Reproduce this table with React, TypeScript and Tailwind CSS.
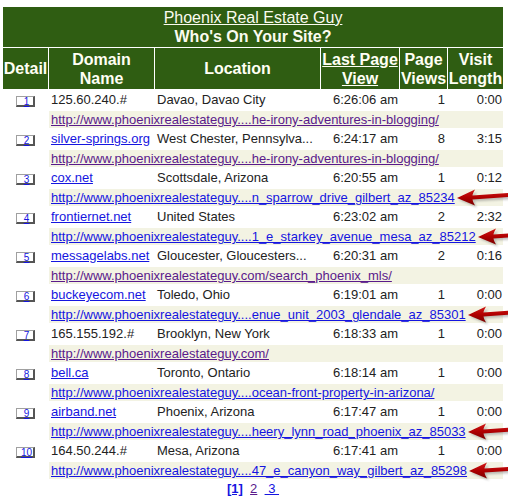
import React from 'react'

interface Visit {
  n: number
  domain: string
  domainIsLink: boolean
  location: string
  time: string
  views: number
  length: string
  url: string
  visited: boolean
  arrow?: boolean
}

const VISITS: Visit[] = [
  { n: 1, domain: '125.60.240.#', domainIsLink: false, location: 'Davao, Davao City', time: '6:26:06 am', views: 1, length: '0:00', url: 'http://www.phoenixrealestateguy....he-irony-adventures-in-blogging/', visited: true },
  { n: 2, domain: 'silver-springs.org', domainIsLink: true, location: 'West Chester, Pennsylva...', time: '6:24:17 am', views: 8, length: '3:15', url: 'http://www.phoenixrealestateguy....he-irony-adventures-in-blogging/', visited: true },
  { n: 3, domain: 'cox.net', domainIsLink: true, location: 'Scottsdale, Arizona', time: '6:20:55 am', views: 1, length: '0:12', url: 'http://www.phoenixrealestateguy....n_sparrow_drive_gilbert_az_85234', visited: false, arrow: true },
  { n: 4, domain: 'frontiernet.net', domainIsLink: true, location: 'United States', time: '6:23:02 am', views: 2, length: '2:32', url: 'http://www.phoenixrealestateguy....1_e_starkey_avenue_mesa_az_85212', visited: false, arrow: true },
  { n: 5, domain: 'messagelabs.net', domainIsLink: true, location: 'Gloucester, Gloucesters...', time: '6:20:31 am', views: 2, length: '0:16', url: 'http://www.phoenixrealestateguy.com/search_phoenix_mls/', visited: true },
  { n: 6, domain: 'buckeyecom.net', domainIsLink: true, location: 'Toledo, Ohio', time: '6:19:01 am', views: 1, length: '0:00', url: 'http://www.phoenixrealestateguy....enue_unit_2003_glendale_az_85301', visited: false, arrow: true },
  { n: 7, domain: '165.155.192.#', domainIsLink: false, location: 'Brooklyn, New York', time: '6:18:33 am', views: 1, length: '0:00', url: 'http://www.phoenixrealestateguy.com/', visited: true },
  { n: 8, domain: 'bell.ca', domainIsLink: true, location: 'Toronto, Ontario', time: '6:18:14 am', views: 1, length: '0:00', url: 'http://www.phoenixrealestateguy....ocean-front-property-in-arizona/', visited: false },
  { n: 9, domain: 'airband.net', domainIsLink: true, location: 'Phoenix, Arizona', time: '6:17:47 am', views: 1, length: '0:00', url: 'http://www.phoenixrealestateguy....heery_lynn_road_phoenix_az_85033', visited: false, arrow: true },
  { n: 10, domain: '164.50.244.#', domainIsLink: false, location: 'Mesa, Arizona', time: '6:17:41 am', views: 1, length: '0:00', url: 'http://www.phoenixrealestateguy....47_e_canyon_way_gilbert_az_85298', visited: false, arrow: true },
]

function RedArrow() {
  return (
    <svg width="58" height="22" viewBox="0 0 58 22" className="absolute left-full top-1/2 -translate-y-1/2 ml-[1px] pointer-events-none">
      <defs>
        <linearGradient id="arrowRed" x1="0" y1="0" x2="0" y2="1">
          <stop offset="0" stopColor="#d01818" />
          <stop offset="0.5" stopColor="#b00000" />
          <stop offset="1" stopColor="#7a0000" />
        </linearGradient>
        <filter id="arrowShadow" x="-20%" y="-40%" width="140%" height="180%">
          <feGaussianBlur stdDeviation="1.2" />
        </filter>
      </defs>
      {/* soft grey shadow */}
      <path
        d="M3 13 L21 5 Q18.5 9 18.5 10.5 L58 8 L58 12 L18.5 14.5 Q18.5 16.5 21 20.5 Z"
        fill="#777"
        opacity="0.45"
        filter="url(#arrowShadow)"
      />
      <path
        d="M1 11 L19 2.5 Q16.5 7 16.5 8.6 L58 5.6 L58 9.6 L16.5 12.6 Q16.5 14.5 19 18.5 Z"
        fill="url(#arrowRed)"
      />
    </svg>
  )
}

function DetailBox({ n }: { n: number }) {
  return (
    <span className="inline-block h-[11px] min-w-[19px] px-[1px] border-t border-l border-b-2 border-r-2 border-t-[#a0a0a0] border-l-[#a0a0a0] border-b-[#555] border-r-[#555] bg-white text-center align-middle">
      <a className="block text-[10px] leading-[9px] text-[#1515e0] underline pl-[3px]">{n}</a>
    </span>
  )
}

export default function App() {
  return (
    <div className="w-[508px] h-[501px] overflow-hidden bg-white pt-[6px] pl-[2px] text-[13px] leading-[16px] text-[#222]" style={{ fontFamily: '"Liberation Sans", Arial, sans-serif' }}>
      <table className="w-[502px] table-fixed border-separate border-spacing-px">
        <colgroup>
          <col className="w-[45px]" />
          <col className="w-[105px]" />
          <col className="w-[165px]" />
          <col className="w-[78px]" />
          <col className="w-[47px]" />
          <col className="w-[55px]" />
        </colgroup>
        <thead>
          <tr>
            <th colSpan={6} className="h-[40px] bg-[#2f5d12] text-center text-[16px] leading-[19px] text-[#fbfbef]">
              <div className="font-normal underline">Phoenix Real Estate Guy</div>
              <div className="font-bold">Who's On Your Site?</div>
            </th>
          </tr>
          <tr className="text-[16px] leading-[19px] font-bold text-[#fffff4]">
            <th className="h-[41px] bg-[#2f5d12] text-center">Detail</th>
            <th className="bg-[#2f5d12] text-center">Domain<br />Name</th>
            <th className="bg-[#2f5d12] text-center">Location</th>
            <th className="bg-[#2f5d12] text-center"><span className="underline">Last Page<br />View</span></th>
            <th className="bg-[#2f5d12] text-center">Page<br />Views</th>
            <th className="bg-[#2f5d12] text-center">Visit<br />Length</th>
          </tr>
        </thead>
        <tbody>
          {VISITS.map(v => (
            <React.Fragment key={v.n}>
              <tr className="h-[20px]">
                <td className="h-[20px] text-center align-middle pt-[2px] leading-[12px]"><DetailBox n={v.n} /></td>
                <td className="pl-[2px] whitespace-nowrap overflow-hidden">
                  {v.domainIsLink ? <a className="text-[#1515e0] underline">{v.domain}</a> : v.domain}
                </td>
                <td className="pl-[2px] whitespace-nowrap overflow-hidden">{v.location}</td>
                <td className="pr-[1px] text-right whitespace-nowrap">{v.time}</td>
                <td className="pr-[2px] text-right">{v.views}</td>
                <td className="pr-[1px] text-right">{v.length}</td>
              </tr>
              <tr className="h-[17px]">
                <td className="h-[17px]" />
                <td colSpan={5} className="h-[17px] bg-[#f3f3e3] pl-[2px] leading-[15px] whitespace-nowrap">
                  <span className="relative inline-block align-top">
                    <a className={v.visited ? 'text-[#5a1a8b] underline' : 'text-[#1515e0] underline'}>{v.url}</a>
                    {v.arrow && <RedArrow />}
                  </span>
                </td>
              </tr>
            </React.Fragment>
          ))}
        </tbody>
      </table>
      <div className="mt-[1px] text-center leading-[16px] pr-[4px]">
        <a className="font-bold text-[#1515e0] underline">[1]</a>
        <span>&nbsp;&nbsp;</span>
        <a className="text-[#5a1a8b] underline">2</a>
        <span>&nbsp;&nbsp;</span>
        <a className="text-[#1515e0] underline">&nbsp;3&nbsp;</a>
      </div>
    </div>
  )
}
